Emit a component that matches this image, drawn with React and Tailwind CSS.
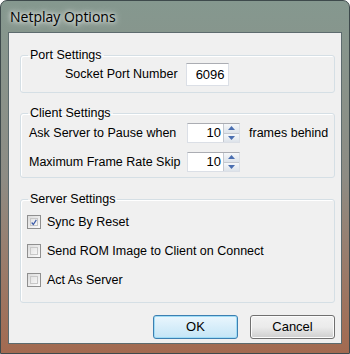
import { useState } from 'react'

const FONT = { fontFamily: '"Liberation Sans", Arial, sans-serif' }

function Group({ title, children, className = '' }) {
  return (
    <fieldset className={`rounded-[3px] border border-[#d5dfe5] shadow-[inset_1px_1px_0_#fff] ${className}`}>
      <legend className="ml-[7px] px-[2px] leading-[15px]">{title}</legend>
      {children}
    </fieldset>
  )
}

function Spin({ value }) {
  return (
    <div className="flex h-[20px] w-[53px] shrink-0 border border-[#dbdfe6] border-t-[#abadb3] bg-white">
      <div className="flex flex-1 items-center justify-end pr-[2px] text-[13px]">{value}</div>
      <div className="flex w-[16px] flex-col border-l border-[#c5c9d0]">
        <div className="flex flex-1 items-center justify-center border-b border-[#c5c9d0] bg-gradient-to-b from-[#f6f8fa] to-[#dde3ea]">
          <svg width="7" height="4" viewBox="0 0 7 4"><path d="M0 4 L3.5 0 L7 4 Z" fill="#4a6eb0" /></svg>
        </div>
        <div className="flex flex-1 items-center justify-center bg-gradient-to-b from-[#f6f8fa] to-[#dde3ea]">
          <svg width="7" height="4" viewBox="0 0 7 4"><path d="M0 0 L7 0 L3.5 4 Z" fill="#4a6eb0" /></svg>
        </div>
      </div>
    </div>
  )
}

function Check({ label, checked }) {
  return (
    <div className="flex h-[20px] items-center gap-[6px]">
      <div className="flex h-[14px] w-[14px] items-center justify-center border border-[#8f8f8f] bg-gradient-to-br from-[#dcdcdc] to-[#fbfbfb] p-[2px]">
        <div className="flex h-full w-full items-center justify-center border border-[#c8c8c8] bg-gradient-to-br from-[#e4e4e4] to-[#f6f6f6]">
          {checked && (
            <svg width="9" height="9" viewBox="0 0 9 9">
              <path d="M1 4.5 L3.5 7.5 L8 0.5" fill="none" stroke="#3b5aa8" strokeWidth="1.8" />
            </svg>
          )}
        </div>
      </div>
      <span className="whitespace-nowrap">{label}</span>
    </div>
  )
}

function Btn({ children, focused }) {
  return (
    <button
      className={`h-[24px] w-[85px] rounded-[3px] border text-[13px] ${
        focused
          ? 'border-[#3c7fb1] bg-gradient-to-b from-[#eaf6fd] to-[#c4e5f6] shadow-[inset_0_0_0_1px_#9fdcf6]'
          : 'border-[#707070] bg-gradient-to-b from-[#f2f2f2] via-[#ebebeb] to-[#cfcfcf] shadow-[inset_0_0_0_1px_#fcfcfc]'
      }`}
    >
      {children}
    </button>
  )
}

export default function App() {
  const [port] = useState('6096')

  return (
    <div
      className="flex h-[354px] w-[350px] flex-col rounded-t-[7px] border border-[#3e4a4c] bg-gradient-to-b from-[#85988f] via-[#8d8c84] to-[#a36a50] pb-[9px] text-black"
      style={FONT}
    >
      {/* title bar */}
      <div className="flex h-[31px] shrink-0 items-center pl-[9px] text-[14px] [font-family:'Open_Sans',sans-serif] [text-shadow:0_0_8px_#fff,0_0_4px_#fff]">
        Netplay Options
      </div>

      {/* client area */}
      <div className="mx-[7px] flex min-h-0 flex-1 flex-col border border-[#5d6b6e] bg-[#f0f0f0] pl-[11px] pr-[6px] text-[12.5px]">
        <Group title="Port Settings" className="mt-[15px] pb-[6px]">
          <div className="flex items-center gap-[8px] pl-[44px]">
            <span className="whitespace-nowrap">Socket Port Number</span>
            <div className="flex h-[23px] w-[43px] items-center justify-end border border-[#dbdfe6] border-t-[#abadb3] bg-white pr-[3px] text-[13px]">
              {port}
            </div>
          </div>
        </Group>

        <Group title="Client Settings" className="mt-[13px] pb-[5px]">
          <div className="flex flex-col gap-[9px] pt-[2px]">
            <div className="flex items-center">
              <span className="w-[166px] shrink-0 whitespace-nowrap pl-[8px]">Ask Server to Pause when</span>
              <Spin value="10" />
              <span className="ml-[9px] whitespace-nowrap">frames behind</span>
            </div>
            <div className="flex items-center">
              <span className="w-[166px] shrink-0 whitespace-nowrap pl-[8px]">Maximum Frame Rate Skip</span>
              <Spin value="10" />
            </div>
          </div>
        </Group>

        <Group title="Server Settings" className="mt-[14px] pb-[12px]">
          <div className="flex flex-col gap-[9px] pl-[6px] pt-[5px]">
            <Check label="Sync By Reset" checked />
            <Check label="Send ROM Image to Client on Connect" />
            <Check label="Act As Server" />
          </div>
        </Group>

        <div className="mt-[12px] flex justify-end gap-[12px]">
          <Btn focused>OK</Btn>
          <Btn>Cancel</Btn>
        </div>
      </div>
    </div>
  )
}
